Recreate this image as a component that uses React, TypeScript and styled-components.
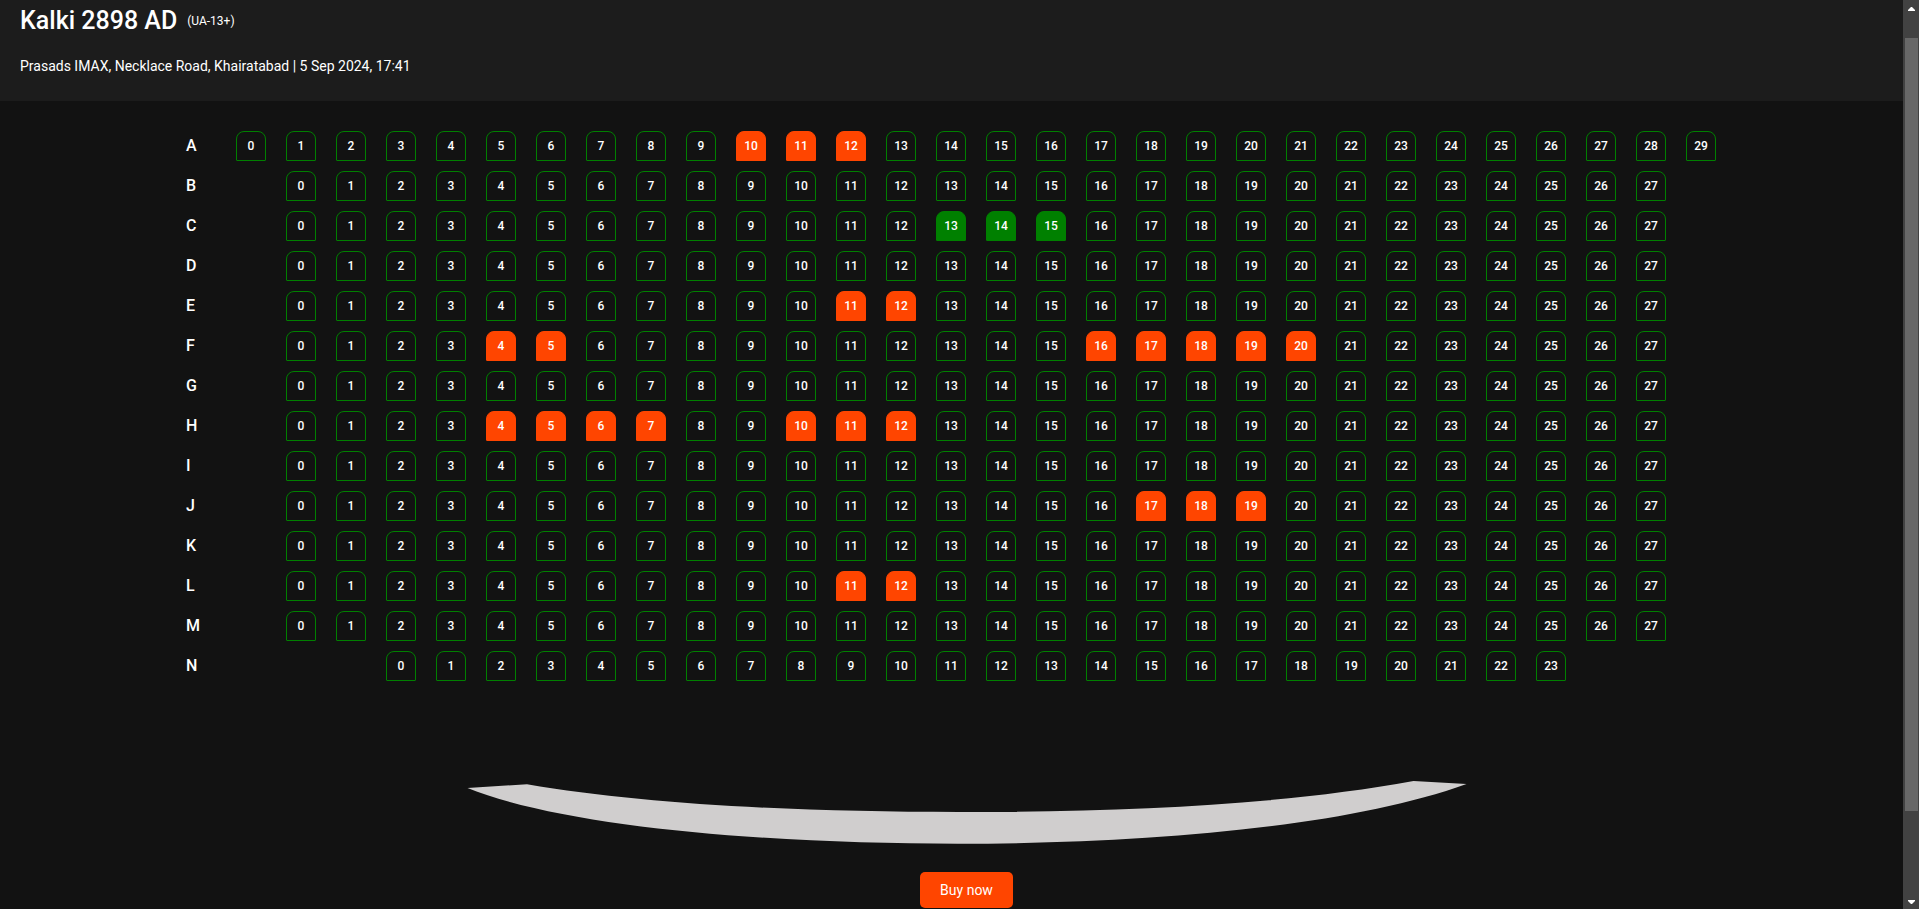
import React, { useState } from "react";
import styled, { createGlobalStyle, css } from "styled-components";

const GlobalStyle = createGlobalStyle`
  *, *::before, *::after { box-sizing: border-box; }
  body {
    margin: 0;
    background: #121212;
    color: #fff;
    font-family: Roboto, sans-serif;
    font-size: 14px;
  }
  h1, p { margin: 0; }
`;

const Page = styled.div`
  display: flex;
  height: 100vh;
  overflow: hidden;
`;

const Content = styled.div`
  flex: 1;
  min-width: 0;
  display: flex;
  flex-direction: column;
`;

const Header = styled.header`
  flex: none;
  display: flex;
  flex-direction: column;
  gap: 21px;
  padding: 5px 20px 27px;
  background: #1c1c1c;
`;

const Title = styled.h1`
  display: flex;
  align-items: center;
  gap: 10px;
  font-size: 25px;
  font-weight: 500;
  line-height: 32px;
`;

const Rating = styled.span`
  font-size: 12px;
  font-weight: 400;
  line-height: 16px;
`;

const ShowInfo = styled.p`
  line-height: 16px;
`;

const Hall = styled.main`
  display: flex;
  flex-direction: column;
  align-items: center;
  padding: 30px 1px 0 0;
`;

const SeatMap = styled.div`
  display: flex;
  flex-direction: column;
  gap: 10px;
`;

const SeatRow = styled.div`
  display: grid;
  grid-template-columns: repeat(31, 30px);
  column-gap: 20px;
  align-items: center;
`;

const RowName = styled.span`
  font-size: 16px;
  font-weight: 500;
  line-height: 20px;
`;

type SeatState = "free" | "booked" | "selected";

const fills = {
  free: css`border: 1px solid green; background: transparent;`,
  booked: css`border: 1px solid orangered; background: orangered;`,
  selected: css`border: 1px solid green; background: green;`,
};

const Seat = styled.button<{ $state: SeatState; $column?: number }>`
  ${({ $column }) => $column && css`grid-column-start: ${$column};`}
  height: 30px;
  padding: 0;
  border-radius: 8px 8px 1px 1px;
  color: #fff;
  font: 500 12px/16px Roboto, sans-serif;
  cursor: pointer;
  ${({ $state }) => fills[$state]}
`;

const Stage = styled.section`
  align-self: stretch;
  display: flex;
  flex-direction: column;
  align-items: center;
  gap: 27px;
  padding: 100px 0 0 31px;
`;

const Screen = styled.svg`
  display: block;
  width: 1001px;
  height: 64px;
`;

const BuyButton = styled.button`
  height: 36px;
  padding: 0 20px;
  border: 0;
  border-radius: 5px;
  background: orangered;
  color: #fff;
  font: 400 14px/16px Roboto, sans-serif;
  cursor: pointer;
`;

const ScrollTrack = styled.div`
  flex: none;
  display: flex;
  flex-direction: column;
  align-items: center;
  width: 16px;
  padding: 7px 1px 5px 2px;
  background: #424242;
`;

const Arrow = styled.svg`
  flex: none;
  width: 7px;
  height: 4px;
  fill: #fff;
`;

const ScrollThumb = styled.div`
  flex: 773;
  align-self: stretch;
  background: #686868;
`;

const TrackSpace = styled.div<{ $grow: number }>`
  flex: ${({ $grow }) => $grow};
`;

interface Row {
  name: string;
  count: number;
  start: number;
  booked: number[];
}

const rows: Row[] = [
  { name: "A", count: 30, start: 2, booked: [10, 11, 12] },
  { name: "B", count: 28, start: 3, booked: [] },
  { name: "C", count: 28, start: 3, booked: [] },
  { name: "D", count: 28, start: 3, booked: [] },
  { name: "E", count: 28, start: 3, booked: [11, 12] },
  { name: "F", count: 28, start: 3, booked: [4, 5, 16, 17, 18, 19, 20] },
  { name: "G", count: 28, start: 3, booked: [] },
  { name: "H", count: 28, start: 3, booked: [4, 5, 6, 7, 10, 11, 12] },
  { name: "I", count: 28, start: 3, booked: [] },
  { name: "J", count: 28, start: 3, booked: [17, 18, 19] },
  { name: "K", count: 28, start: 3, booked: [] },
  { name: "L", count: 28, start: 3, booked: [11, 12] },
  { name: "M", count: 28, start: 3, booked: [] },
  { name: "N", count: 24, start: 5, booked: [] },
];

export default function App() {
  const [selected, setSelected] = useState<string[]>(["C13", "C14", "C15"]);

  const toggle = (id: string) =>
    setSelected((ids) =>
      ids.includes(id) ? ids.filter((other) => other !== id) : [...ids, id]
    );

  return (
    <Page>
      <GlobalStyle />
      <Content>
        <Header>
          <Title>
            Kalki 2898 AD <Rating>(UA-13+)</Rating>
          </Title>
          <ShowInfo>
            Prasads IMAX, Necklace Road, Khairatabad | 5 Sep 2024, 17:41
          </ShowInfo>
        </Header>
        <Hall>
          <SeatMap>
            {rows.map(({ name, count, start, booked }) => (
              <SeatRow key={name}>
                <RowName>{name}</RowName>
                {Array.from({ length: count }, (_, n) => {
                  const id = `${name}${n}`;
                  const state: SeatState = booked.includes(n)
                    ? "booked"
                    : selected.includes(id)
                    ? "selected"
                    : "free";
                  return (
                    <Seat
                      key={id}
                      type="button"
                      $state={state}
                      $column={n === 0 ? start : undefined}
                      onClick={() => state !== "booked" && toggle(id)}
                    >
                      {n}
                    </Seat>
                  );
                })}
              </SeatRow>
            ))}
          </SeatMap>
          <Stage>
            <Screen viewBox="466 781 1001 64" aria-hidden="true">
              <path
                fill="#d0cece"
                d="M467.5 788 L527 784.3 C645 804.5 800 812 958 812 C1130 812 1285 804.5 1413.5 781 L1466.5 784 C1345 828 1140 843.7 958 843.7 C780 843.7 570 829 467.5 788 Z"
              />
            </Screen>
            <BuyButton type="button">Buy now</BuyButton>
          </Stage>
        </Hall>
      </Content>
      <ScrollTrack aria-hidden="true">
        <Arrow viewBox="0 0 7 4">
          <path d="M3 0H4L7 3V4H0V3Z" />
        </Arrow>
        <TrackSpace $grow={27} />
        <ScrollThumb />
        <TrackSpace $grow={89} />
        <Arrow viewBox="0 0 7 4">
          <path d="M0 0H7V1L4 4H3L0 1Z" />
        </Arrow>
      </ScrollTrack>
    </Page>
  );
}
